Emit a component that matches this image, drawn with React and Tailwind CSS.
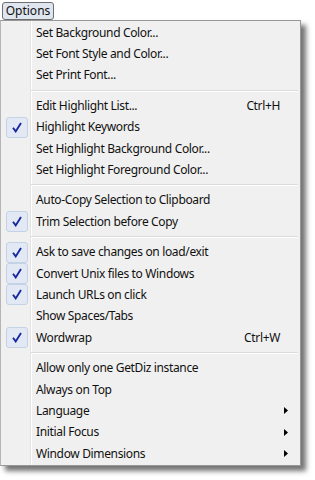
const items = [
  { label: 'Set Background Color...' },
  { label: 'Set Font Style and Color...' },
  { label: 'Set Print Font...' },
  { sep: true },
  { label: 'Edit Highlight List...', key: 'Ctrl+H' },
  { label: 'Highlight Keywords', checked: true },
  { label: 'Set Highlight Background Color...' },
  { label: 'Set Highlight Foreground Color...' },
  { sep: true },
  { label: 'Auto-Copy Selection to Clipboard' },
  { label: 'Trim Selection before Copy', checked: true },
  { sep: true },
  { label: 'Ask to save changes on load/exit', checked: true },
  { label: 'Convert Unix files to Windows', checked: true },
  { label: 'Launch URLs on click', checked: true },
  { label: 'Show Spaces/Tabs' },
  { label: 'Wordwrap', key: 'Ctrl+W', checked: true },
  { sep: true },
  { label: 'Allow only one GetDiz instance' },
  { label: 'Always on Top' },
  { label: 'Language', sub: true },
  { label: 'Initial Focus', sub: true },
  { label: 'Window Dimensions', sub: true },
];

function Check() {
  return (
    <div className="w-[22px] h-[21px] rounded-[3px] border border-[#c4d2e6] bg-[#e2e9f4] flex items-center justify-center">
      <svg width="10" height="11" viewBox="0 0 10 11">
        <path d="M1 5.8 L3.7 9.4 L9 1" fill="none" stroke="#1428a0" strokeWidth="1.9" strokeLinejoin="miter" />
      </svg>
    </div>
  );
}

function Row({ item }) {
  if (item.sep) {
    return (
      <div className="h-[9px] flex items-center pl-[30px] pr-[2px]">
        <div className="w-full border-t border-t-[#dcdcdc] border-b border-b-white" />
      </div>
    );
  }
  return (
    <div className="h-[21.4px] flex items-center">
      <div className="w-[30px] flex items-center justify-center pl-[1px]">
        {item.checked && <Check />}
      </div>
      <span className="ml-[5px] flex-1 whitespace-nowrap">{item.label}</span>
      {item.key && <span className="mr-[20px]">{item.key}</span>}
      {item.sub && (
        <svg width="4" height="7" viewBox="0 0 4 7" className="mr-[12px]">
          <path d="M0 0 L4 3.5 L0 7 Z" fill="#000" />
        </svg>
      )}
    </div>
  );
}

export default function App() {
  return (
    <div className="w-[315px] h-[480px] bg-white text-[12px] tracking-[-0.35px] text-[#111] font-['Noto_Sans',sans-serif] leading-none">
      <div className="pt-[2px] pl-[2px]">
        <div className="w-[52px] h-[18px] border border-[#6f6f6f] rounded-[3px] bg-[#dfe6ef] flex items-center justify-center tracking-normal">
          Options
        </div>
      </div>
      <div className="relative w-[301px] mt-0 border border-[#979797] border-l-[#b5b5b5] bg-[#f0f0f0] shadow-[5px_5px_5px_rgba(0,0,0,0.55)] py-[1px]">
        <div className="absolute top-0 bottom-0 left-[29px] w-[2px] border-l border-l-[#e2e3e3] border-r border-r-white" />
        <div className="relative">
          {items.map((it, i) => (
            <Row key={i} item={it} />
          ))}
        </div>
      </div>
    </div>
  );
}
